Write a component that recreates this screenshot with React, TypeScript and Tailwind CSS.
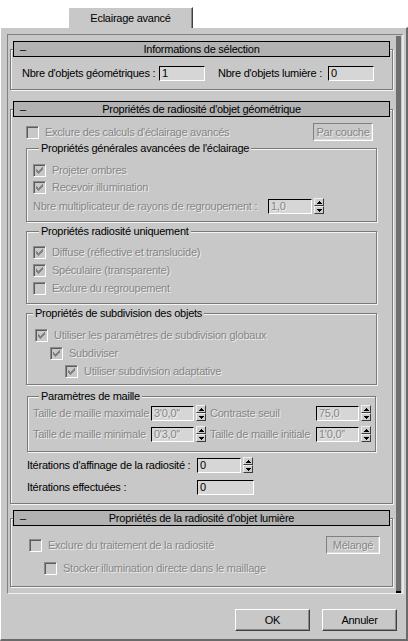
import React from 'react';

const dis = 'text-[#868686] [text-shadow:1px_1px_0_#ededed]';
const etched = 'border border-[#7a7a7a] shadow-[inset_1px_1px_0_#f4f4f4,1px_1px_0_#f4f4f4]';

function Check({ checked, className = '' }: { checked?: boolean; className?: string }) {
  return (
    <span
      className={`w-[13px] h-[13px] shrink-0 border border-t-[#8a8a8a] border-l-[#8a8a8a] border-b-white border-r-white bg-[#c8c8c8] shadow-[inset_1px_1px_0_#5c5c5c] flex items-center justify-center ${className}`}
    >
      {checked && (
        <svg width="7" height="7" viewBox="0 0 7 7" shapeRendering="crispEdges" fill="#828282">
          <rect x="6" y="0" width="1" height="1" />
          <rect x="5" y="1" width="2" height="1" />
          <rect x="0" y="2" width="1" height="1" />
          <rect x="4" y="2" width="3" height="1" />
          <rect x="0" y="3" width="2" height="1" />
          <rect x="3" y="3" width="3" height="1" />
          <rect x="0" y="4" width="5" height="1" />
          <rect x="1" y="5" width="3" height="1" />
          <rect x="2" y="6" width="1" height="1" />
        </svg>
      )}
    </span>
  );
}

function CheckRow({ label, checked, className = '' }: { label: string; checked?: boolean; className?: string }) {
  return (
    <div className={`h-[13px] flex items-center ${className}`}>
      <Check checked={checked} />
      <span className={`ml-[6px] whitespace-nowrap ${dis}`}>{label}</span>
    </div>
  );
}

function Field({ value, w, off }: { value: string; w: string; off?: boolean }) {
  return (
    <div
      className={`${w} h-[15px] shrink-0 border border-t-black border-l-black border-b-white border-r-white bg-[#d6d6d6] pl-[2px] flex items-center whitespace-nowrap ${off ? dis : ''}`}
    >
      {value}
    </div>
  );
}

function Spin({ className = '' }: { className?: string }) {
  const btn =
    'flex-1 border border-t-[#f0f0f0] border-l-[#f0f0f0] border-b-[#3c3c3c] border-r-[#3c3c3c] bg-[#cdcdcd] flex items-center justify-center';
  return (
    <div className={`w-[10px] h-[16px] flex flex-col shrink-0 ${className}`}>
      <div className={btn}>
        <svg width="5" height="3" viewBox="0 0 5 3" shapeRendering="crispEdges">
          <path d="M2 0h1v1h1v1h1v1H0V2h1V1h1z" fill="#000" />
        </svg>
      </div>
      <div className={btn}>
        <svg width="5" height="3" viewBox="0 0 5 3" shapeRendering="crispEdges">
          <path d="M0 0h5v1H4v1H3v1H2V2H1V1H0z" fill="#000" />
        </svg>
      </div>
    </div>
  );
}

function Bar({ title }: { title: string }) {
  return (
    <div className="relative z-10 mx-[3px] h-[16px] border border-black bg-[#b2b2b2] grid items-center">
      <span className="[grid-area:1/1] pl-[6px]">–</span>
      <span className="[grid-area:1/1] text-center">{title}</span>
    </div>
  );
}

function Group({ label, className = '', children }: { label: string; className?: string; children: React.ReactNode }) {
  return (
    <div className={`${etched} flex flex-col ${className}`}>
      <span className="-mt-[7px] h-[13px] self-start ml-[6px] px-[2px] bg-[#c8c8c8] whitespace-nowrap">{label}</span>
      {children}
    </div>
  );
}

function FlatBtn({ label, className = '' }: { label: string; className?: string }) {
  return (
    <div
      className={`h-[18px] border border-t-[#808080] border-l-[#808080] border-b-white border-r-white shadow-[inset_-1px_-1px_0_#dcdcdc] flex items-center justify-center ${dis} ${className}`}
    >
      {label}
    </div>
  );
}

function PushBtn({ label }: { label: string }) {
  return (
    <div className="w-[75px] h-[22px] border border-t-white border-l-white border-b-[#404040] border-r-[#404040] shadow-[inset_-1px_-1px_0_#8a8a8a] flex items-center justify-center">
      {label}
    </div>
  );
}

export default function App() {
  return (
    <div className="w-[408px] h-[641px] bg-white overflow-hidden flex flex-col font-['Liberation_Sans',Arial,sans-serif] text-[11px] leading-[13px] tracking-[-0.25px] text-black">
      <div className="h-[27px] shrink-0 flex items-end pl-[68px]">
        <div className="relative z-10 -mb-px w-[125px] h-[21px] bg-[#c8c8c8] border-t border-l border-white border-r border-r-[#404040] shadow-[inset_-1px_0_0_#8a8a8a] rounded-tl-[2px] flex items-center justify-center">
          Eclairage avancé
        </div>
      </div>

      <div className="flex-1 bg-[#c8c8c8] border-t border-l border-white border-r-2 border-r-[#6a6a6a] border-b-2 border-b-[#6a6a6a] flex flex-col">
        {/* rollout area */}
        <div className="mt-[6px] ml-[6px] w-[397px] h-[560px] border-t border-l border-[#808080] border-r-2 border-r-[#e6e6e6] border-b border-b-[#f0f0f0] flex">
          <div className="w-[385px] pl-[2px] pt-[6px] flex flex-col">
            {/* Rollout 1 */}
            <Bar title="Informations de sélection" />
            <div className={`-mt-[8px] ${etched} pt-[16px] pb-[8px] pl-[11px] flex flex-col`}>
              <div className="h-[15px] flex items-center">
                <span className="w-[137px] whitespace-nowrap">Nbre d'objets géométriques :</span>
                <Field value="1" w="w-[46px]" />
                <span className="ml-[13px] w-[110px] whitespace-nowrap">Nbre d'objets lumière :</span>
                <Field value="0" w="w-[46px]" />
              </div>
            </div>

            {/* Rollout 2 */}
            <div className="mt-[11px]">
              <Bar title="Propriétés de radiosité d'objet géométrique" />
            </div>
            <div className={`-mt-[8px] ${etched} pt-[13px] pb-[8px] pl-[15px] pr-[19px] flex flex-col`}>
              <div className="h-[18px] flex items-center">
                <Check />
                <span className={`ml-[6px] ${dis}`}>Exclure des calculs d'éclairage avancés</span>
                <FlatBtn label="Par couche" className="ml-auto w-[60px]" />
              </div>

              <Group label="Propriétés générales avancées de l'éclairage" className="mt-[7px] w-[351px] pb-[7px] pl-[6px]">
                <CheckRow className="mt-[9px]" checked label="Projeter ombres" />
                <CheckRow className="mt-[4px]" checked label="Recevoir illumination" />
                <div className="mt-[4px] h-[16px] flex items-center">
                  <span className={`w-[235px] whitespace-nowrap ${dis}`}>Nbre multiplicateur de rayons de regroupement :</span>
                  <Field value="1,0" w="w-[44px]" off />
                  <Spin className="ml-[2px]" />
                </div>
              </Group>

              <Group label="Propriétés radiosité uniquement" className="mt-[9px] w-[351px] pb-[8px] pl-[6px]">
                <CheckRow className="mt-[8px]" checked label="Diffuse (réflective et translucide)" />
                <CheckRow className="mt-[5px]" checked label="Spéculaire (transparente)" />
                <CheckRow className="mt-[5px]" label="Exclure du regroupement" />
              </Group>

              <Group label="Propriétés de subdivision des objets" className="mt-[9px] w-[351px] pb-[6px]">
                <CheckRow className="mt-[9px] ml-[8px]" checked label="Utiliser les paramètres de subdivision globaux" />
                <CheckRow className="mt-[5px] ml-[23px]" checked label="Subdiviser" />
                <CheckRow className="mt-[5px] ml-[38px]" checked label="Utiliser subdivision adaptative" />
              </Group>

              <Group label="Paramètres de maille" className="mt-[11px] ml-[1px] w-[349px] pb-[9px] pl-[5px]">
                <div className="mt-[2px] h-[16px] flex items-center">
                  <span className={`w-[118px] whitespace-nowrap ${dis}`}>Taille de maille maximale</span>
                  <Field value="3'0,0''" w="w-[43px]" off />
                  <Spin className="ml-[2px]" />
                  <span className={`ml-[4px] w-[106px] whitespace-nowrap ${dis}`}>Contraste seuil</span>
                  <Field value="75,0" w="w-[43px]" off />
                  <Spin className="ml-[2px]" />
                </div>
                <div className="mt-[5px] h-[16px] flex items-center">
                  <span className={`w-[118px] whitespace-nowrap ${dis}`}>Taille de maille minimale</span>
                  <Field value="0'3,0''" w="w-[43px]" off />
                  <Spin className="ml-[2px]" />
                  <span className={`ml-[4px] w-[106px] whitespace-nowrap ${dis}`}>Taille de maille initiale</span>
                  <Field value="1'0,0''" w="w-[43px]" off />
                  <Spin className="ml-[2px]" />
                </div>
              </Group>

              <div className="mt-[5px] ml-[1px] h-[16px] flex items-center">
                <span className="w-[170px] whitespace-nowrap">Itérations d'affinage de la radiosité :</span>
                <Field value="0" w="w-[44px]" />
                <Spin className="ml-[2px]" />
              </div>
              <div className="mt-[6px] ml-[1px] h-[16px] flex items-center">
                <span className="w-[170px] whitespace-nowrap">Itérations effectuées :</span>
                <Field value="0" w="w-[57px]" />
              </div>
            </div>

            {/* Rollout 3 */}
            <div className="mt-[6px]">
              <Bar title="Propriétés de la radiosité d'objet lumière" />
            </div>
            <div className={`-mt-[8px] ${etched} pt-[17px] pb-[11px] pl-[18px] pr-[12px] flex flex-col`}>
              <div className="h-[18px] flex items-center">
                <Check />
                <span className={`ml-[6px] ${dis}`}>Exclure du traitement de la radiosité</span>
                <FlatBtn label="Mélangé" className="ml-auto w-[54px]" />
              </div>
              <CheckRow className="mt-[8px] ml-[15px]" label="Stocker illumination directe dans le maillage" />
            </div>
          </div>

          {/* scroll thumb */}
          <div className="ml-[3px] mt-px w-[5px] h-[557px] bg-[#6e6e6e] border-b-2 border-b-black" />
        </div>

        <div className="mt-[15px] flex justify-end gap-[12px] pr-[9px]">
          <PushBtn label="OK" />
          <PushBtn label="Annuler" />
        </div>
      </div>
    </div>
  );
}
